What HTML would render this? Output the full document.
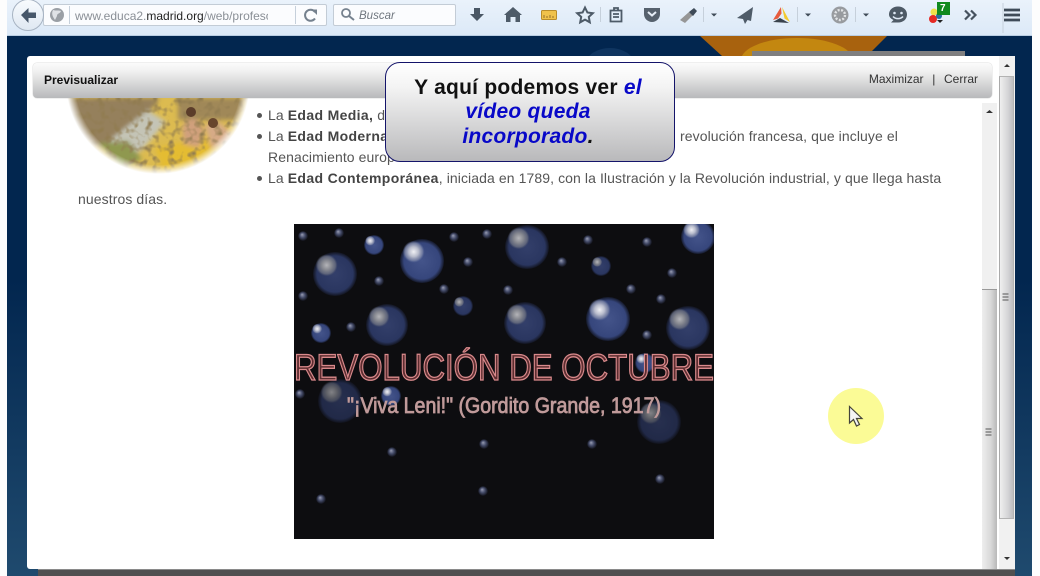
<!DOCTYPE html>
<html lang="es"><head><meta charset="utf-8"><title>Previsualizar</title>
<style>
*{box-sizing:border-box}
html,body{margin:0;padding:0;width:1040px;height:576px;overflow:hidden;background:#fdfdfd;font-family:"Liberation Sans",sans-serif}
.a{position:absolute}
.t{position:absolute;white-space:nowrap;font-size:14px;letter-spacing:.09px;color:#555;line-height:16px}
.t b{color:#444;letter-spacing:.35px}
.dot{position:absolute;width:5px;height:5px;border-radius:50%;background:#555;left:257px}
</style></head><body>
<!-- window background -->
<div class="a" style="left:7px;top:36px;width:1025px;height:540px;background:linear-gradient(#02264f 0,#02264f 45%,#1f4a6e 100%)"></div>
<svg class="a" style="left:7px;top:36px" width="1025" height="30">
<ellipse cx="603" cy="28" rx="24" ry="16" fill="#0f3560"/><ellipse cx="640" cy="30" rx="14" ry="10" fill="#0b2f58"/>
<path d="M693 0H880L860 20H730L715 20Z" fill="#a8620e"/><ellipse cx="790" cy="24" rx="56" ry="22" fill="#c38710"/>
<rect x="745" y="15" width="213" height="10" fill="#7f7f80"/>
</svg>
<div class="a" style="left:38px;top:569px;width:977px;height:7px;background:#505050"></div>
<div class="a" style="left:38px;top:569px;width:977px;height:1px;background:#8a8a8a"></div>
<!-- toolbar -->
<div class="a" style="left:7px;top:0;width:1025px;height:36px;background:linear-gradient(#eaf2fb,#dce9f7);border-bottom:1px solid #b9cde2"></div>
<div class="a" style="left:43px;top:4px;width:284px;height:22px;background:#fbfcfe;border:1px solid #c3ccd6;border-radius:2px"></div>
<div class="a" style="left:12px;top:-1px;width:32px;height:32px;border-radius:50%;background:linear-gradient(#f8fbfe,#dfe8f2);border:1px solid #a7b3c2"></div>
<svg class="a" style="left:0;top:0" width="1040" height="36">
<path d="M21 15l7.500-7v4.500H36v5.500h-7.500V23z" fill="#47576a"/>
<circle cx="57" cy="15" r="7" fill="#9a9fa5"/><path d="M53 10c3 1 6 0 8 1-1 3-4 2-4 5l-2 4c-2-3-4-6-2-10z" fill="#dfe2e6"/>
<path d="M69.500 6V24M295.500 6V24M600.500 7V22M703.500 7V22M797.500 7V22M855.500 7V22M1003 3V33" stroke="#c6d0db"/>
<path d="M315 12a5.500 5.500 0 1 0 0 6.500" fill="none" stroke="#75818e" stroke-width="2"/><path d="M311.500 9.500h5.500v5.500z" fill="#75818e"/>
<circle cx="346" cy="13" r="4" fill="none" stroke="#75818e" stroke-width="1.800"/><path d="M349 16l5 4" stroke="#75818e" stroke-width="2"/>
<path d="M474 8h6v6h4l-7 7-7-7h4z" fill="#4a5765"/>
<path d="M513 7l9 8h-2v7h-4.500v-5h-5v5H506v-7h-2z" fill="#4e5b68"/>
<rect x="541.500" y="10.500" width="15" height="9" rx="1" fill="#f0c24b" stroke="#b98d2b"/><path d="M544 15v3M547 16v2M550 15v3M553 16v2" stroke="#96702a"/>
<path d="M585 7.500l2.400 5 5.400.7-4 3.700 1 5.400-4.800-2.700-4.800 2.700 1-5.400-4-3.700 5.400-.7z" fill="none" stroke="#4e5b68" stroke-width="2"/>
<path d="M610.500 10.500h11v11h-11zM614 10.500V8h4v2.500M613 14h6M613 17h6" fill="none" stroke="#4e5b68" stroke-width="1.800"/>
<path d="M644 8h16v6a8 8 0 0 1-16 0z" fill="#56616d"/><path d="M648 12l4 3.500 4-3.500" fill="none" stroke="#e7eef7" stroke-width="2"/>
<path d="M680 20l9-8 4 3-8 8z" fill="#969696"/><path d="M689 12l5-4 3 3-4 5z" fill="#3f4b58"/>
<path d="M711 13.500h6l-3 3zM805 13.500h6l-3 3zM863 13.500h6l-3 3z" fill="#3f4b58"/>
<path d="M753 7l-16 11 6 1 2 5 2.500-4 3.500 1z" fill="#4e5b68"/>
<path d="M781 7l-8 13 5-1.500 3.500-5z" fill="#e65b3e"/><path d="M782 7l8 15-5.500-3.500z" fill="#f2c92e"/><path d="M773 22l7-4 9 5z" fill="#39424c"/>
<circle cx="840" cy="15" r="8.500" fill="#989b9f"/><circle cx="840" cy="15" r="5" fill="none" stroke="#e2e4e6" stroke-width="2.400" stroke-dasharray="2 1.500"/>
<path d="M898 6.500c5.500 0 9 3.500 9 8s-3.500 8-9 8h-7l2.500-2.500c-2.500-1.200-4.500-3-4.500-5.500 0-4.500 3.500-8 9-8z" fill="#4e5a66"/><circle cx="894.500" cy="13" r="1.300" fill="#dfe9f5"/><circle cx="901.500" cy="13" r="1.300" fill="#dfe9f5"/><path d="M893 16.500c2.500 2.800 7.500 2.800 10 0" fill="none" stroke="#dfe9f5" stroke-width="1.500"/>
<circle cx="934" cy="12" r="3.500" fill="#efe24a"/><circle cx="933" cy="19" r="4" fill="#e52a24"/><circle cx="939" cy="16" r="3" fill="#27709f"/><path d="M937 20h6l-3 3z" fill="#222"/>
<rect x="937" y="2" width="13" height="13" fill="#0f8a1e"/>
<path d="M965 10.500l4.500 4.500-4.500 4.500M971 10.500l4.500 4.500-4.500 4.500" fill="none" stroke="#46525f" stroke-width="2.200"/>
<path d="M1004 10h16M1004 15h16M1004 20h16" stroke="#3f4b58" stroke-width="2.800"/>
</svg>
<div class="t" style="left:75px;top:8px;font-size:12px;letter-spacing:0;color:#8a8f96;width:193px;overflow:hidden">www.educa2.<span style="color:#222">madrid.org</span>/web/profesor</div>
<div class="a" style="left:333px;top:4px;width:123px;height:22px;background:#fbfcfe;border:1px solid #c3ccd6;border-radius:2px"></div>
<svg class="a" style="left:339px;top:7px" width="18" height="16"><circle cx="7" cy="6" r="4" fill="none" stroke="#75818e" stroke-width="1.800"/><path d="M10 9l5 4" stroke="#75818e" stroke-width="2"/></svg>
<div class="t" style="left:359px;top:8px;font-size:11.500px;letter-spacing:0;color:#70777f;font-style:italic">Buscar</div>
<div class="t" style="left:940px;top:1px;font-size:10px;letter-spacing:0;font-weight:bold;color:#fff">7</div>
<!-- modal -->
<div class="a" style="left:27px;top:56px;width:988px;height:513px;background:#fff;border-radius:3px 3px 0 3px"></div>
<div class="a" style="left:33px;top:63px;width:959px;height:35px;background:linear-gradient(#fbfbfb,#f0f0f0 25%,#b8b9bb);border-radius:4px;box-shadow:0 0 1px #999"></div>
<div class="t" style="left:44px;top:72px;font-size:12px;letter-spacing:0;font-weight:bold;color:#111">Previsualizar</div>
<div class="t" style="right:62px;top:71px;font-size:12px;letter-spacing:0;color:#333;word-spacing:1px">Maximizar &nbsp;|&nbsp; Cerrar</div>
<!-- circular picture -->
<svg class="a" style="left:60px;top:98px" width="195" height="80">
<defs><radialGradient id="fade" gradientUnits="userSpaceOnUse" cx="98" cy="-16" r="92"><stop offset=".9" stop-color="#fff"/><stop offset="1" stop-color="#000"/></radialGradient><mask id="m"><rect width="195" height="80" fill="url(#fade)"/></mask>
<filter id="bl"><feGaussianBlur stdDeviation="2.500"/></filter>
<filter id="n" x="0" y="0" width="100%" height="100%"><feTurbulence type="fractalNoise" baseFrequency=".13" numOctaves="2" seed="5"/><feColorMatrix values="0 0 0 0 .28 0 0 0 0 .2 0 0 0 0 .08 3 0 0 0 -1.450"/></filter></defs>
<g mask="url(#m)"><rect width="195" height="80" fill="#dcbb50"/>
<g filter="url(#bl)"><path d="M0 0H100L70 40 40 50 0 30z" fill="#95805c"/><path d="M50 42L88 12l18 12-24 28-28 12z" fill="#c4c4b6"/><path d="M38 45l30-2 14 18-20 10z" fill="#8f9850"/><path d="M95 50l55-12 35-12-20 44-60 8z" fill="#e4bc30"/>
<path d="M118 0h68l-8 22h-60z" fill="#a08858"/><path d="M122 30q10-20 22 2l-5 18-15-4z" fill="#d0a07c"/><path d="M145 28q12-10 24 5l4 12-22 5z" fill="#d6aa86"/></g>
<rect width="195" height="80" filter="url(#n)"/>
<circle cx="131" cy="14" r="5" fill="#5b3d2a"/><circle cx="153" cy="25" r="5" fill="#67452d"/></g></svg>
<!-- text -->
<div class="dot" style="top:113px"></div><div class="dot" style="top:134px"></div><div class="dot" style="top:176px"></div>
<div class="t" style="left:268px;top:107px">La <b>Edad Media,</b> d</div>
<div class="t" style="left:268px;top:128px">La <b>Edad Moderna</b></div>
<div class="t" style="left:680px;top:128px">revolución francesa, que incluye el</div>
<div class="t" style="left:268px;top:149px">Renacimiento europ</div>
<div class="t" style="left:268px;top:170px">La <b>Edad Contemporánea</b>, iniciada en 1789, con la Ilustración y la Revolución industrial, y que llega hasta</div>
<div class="t" style="left:78px;top:191px">nuestros días.</div>
<!-- video -->
<svg class="a" style="left:294px;top:224px" width="420" height="315" viewBox="294 224 420 315">
<defs>
<radialGradient id="bb"><stop offset="0" stop-color="#333f6a"/><stop offset=".82" stop-color="#2a3660"/><stop offset="1" stop-color="#12141f"/></radialGradient>
<radialGradient id="cc"><stop offset="0" stop-color="#44548a"/><stop offset=".82" stop-color="#36467c"/><stop offset="1" stop-color="#141828"/></radialGradient>
<radialGradient id="hh"><stop offset="0" stop-color="#b4b4b8"/><stop offset=".45" stop-color="#85878f"/><stop offset=".8" stop-color="#6a6f80" stop-opacity=".8"/><stop offset="1" stop-color="#555b70" stop-opacity="0"/></radialGradient>
<radialGradient id="hw"><stop offset="0" stop-color="#f0f0f4"/><stop offset=".45" stop-color="#b8bccc"/><stop offset=".8" stop-color="#7f88a8" stop-opacity=".8"/><stop offset="1" stop-color="#6070a0" stop-opacity="0"/></radialGradient>
<radialGradient id="s" cx=".5" cy=".5" r=".5" fx=".4" fy=".35"><stop offset="0" stop-color="#9a9fb4"/><stop offset=".5" stop-color="#454c6a"/><stop offset="1" stop-color="#0e0f16"/></radialGradient>
<g id="B"><circle r="1" fill="url(#bb)"/><circle cx="-.38" cy="-.4" r=".5" fill="url(#hh)"/></g>
<g id="C"><circle r="1" fill="url(#cc)"/><circle cx="-.38" cy="-.42" r=".5" fill="url(#hw)"/></g>
</defs>
<rect x="294" y="224" width="420" height="315" fill="#0d0d10"/>
<use href="#B" transform="translate(335 274) scale(22)"/><use href="#C" transform="translate(422 261) scale(22)"/><use href="#B" transform="translate(527 247) scale(22)"/><use href="#C" transform="translate(698 237) scale(17)"/><use href="#B" transform="translate(387 325) scale(21)"/><use href="#B" transform="translate(525 323) scale(21)"/><use href="#C" transform="translate(608 319) scale(22)"/><use href="#B" transform="translate(688 328) scale(22)"/><use href="#B" transform="translate(601 266) scale(10)"/><use href="#B" transform="translate(463 306) scale(10)"/><use href="#C" transform="translate(374 245) scale(10)"/><use href="#C" transform="translate(321 333) scale(10)"/>
<g fill="url(#s)"><circle cx="303" cy="236" r="5"/><circle cx="339" cy="233" r="5"/><circle cx="454" cy="237" r="5"/><circle cx="487" cy="234" r="5"/><circle cx="588" cy="240" r="5"/><circle cx="647" cy="242" r="5"/><circle cx="468" cy="262" r="5"/><circle cx="562" cy="262" r="5"/><circle cx="672" cy="273" r="5"/><circle cx="379" cy="281" r="5"/><circle cx="444" cy="289" r="5"/><circle cx="508" cy="290" r="5"/><circle cx="631" cy="289" r="5"/><circle cx="661" cy="299" r="5"/><circle cx="303" cy="296" r="5"/><circle cx="351" cy="327" r="5"/><circle cx="647" cy="335" r="5"/><circle cx="300" cy="394" r="5"/><circle cx="484" cy="444" r="5"/><circle cx="592" cy="444" r="5"/><circle cx="392" cy="452" r="5"/><circle cx="660" cy="479" r="5"/><circle cx="483" cy="491" r="5"/><circle cx="321" cy="499" r="5"/></g>
<use href="#B" opacity=".7" transform="translate(340 401) scale(22)"/><use href="#C" transform="translate(391 396) scale(10)"/><use href="#B" opacity=".7" transform="translate(659 422) scale(22)"/><use href="#C" transform="translate(645 363) scale(10)"/>
<text x="294" y="380" font-family="Liberation Sans" font-size="37" textLength="420" lengthAdjust="spacingAndGlyphs" fill="#5d2d30" stroke="#d98a8c" stroke-width="1.300">REVOLUCIÓN DE OCTUBRE</text>
<text x="347" y="413" font-family="Liberation Sans" font-size="22" textLength="314" lengthAdjust="spacingAndGlyphs" fill="#c09a9a" stroke="#c09a9a" stroke-width=".8">"¡Viva Leni!" (Gordito Grande, 1917)</text>
</svg>
<!-- inner scrollbar -->
<div class="a" style="left:982px;top:103px;width:15px;height:466px;background:#f0f0f0"></div>
<div class="a" style="left:982px;top:289px;width:15px;height:280px;background:linear-gradient(90deg,#eee,#d8d8d8 60%,#b8b8b8);border-top:1px solid #999"></div>
<!-- outer scrollbar -->
<div class="a" style="left:999px;top:56px;width:16px;height:513px;background:#f1f1f1"></div>
<div class="a" style="left:999px;top:76px;width:15px;height:443px;background:linear-gradient(90deg,#efefef,#d5d5d7 60%,#bdbdc0);border:1px solid #b3b3b3;border-left-color:#aaa"></div>
<svg class="a" style="left:980px;top:56px" width="36" height="510">
<path d="M6 57l3.500-3 3.500 3zM24 11l3-3 3 3z" fill="#333"/><path d="M24 501h6l-3 3z" fill="#333"/>
<path d="M22.500 238h6M22.500 241h6M22.500 244h6M5.500 373h6M5.500 376h6M5.500 379h6" stroke="#555"/>
</svg>
<!-- callout -->
<div class="a" style="left:385px;top:62px;width:290px;height:100px;border:1px solid #14146a;border-radius:15px;background:linear-gradient(#fff,#f3f3f3 25%,#b9b9bb);font-weight:bold;font-size:21px;letter-spacing:.25px;line-height:24.300px;text-align:center;padding:13px 4px 0 0;color:#111">Y aquí podemos ver <i style="color:#0808c8">el<br>vídeo queda<br>incorporado</i><i>.</i></div>
<!-- pointer -->
<div class="a" style="left:828px;top:388px;width:56px;height:56px;border-radius:50%;background:#fbfb96"></div>
<svg class="a" style="left:846px;top:404px" width="20" height="26"><path d="M3.500 2.500V19l4-3.500 3 6.500 3-1.500-3-6h5.500z" fill="#f4f4f4" stroke="#44443a" stroke-width="1.200"/></svg>
</body></html>
